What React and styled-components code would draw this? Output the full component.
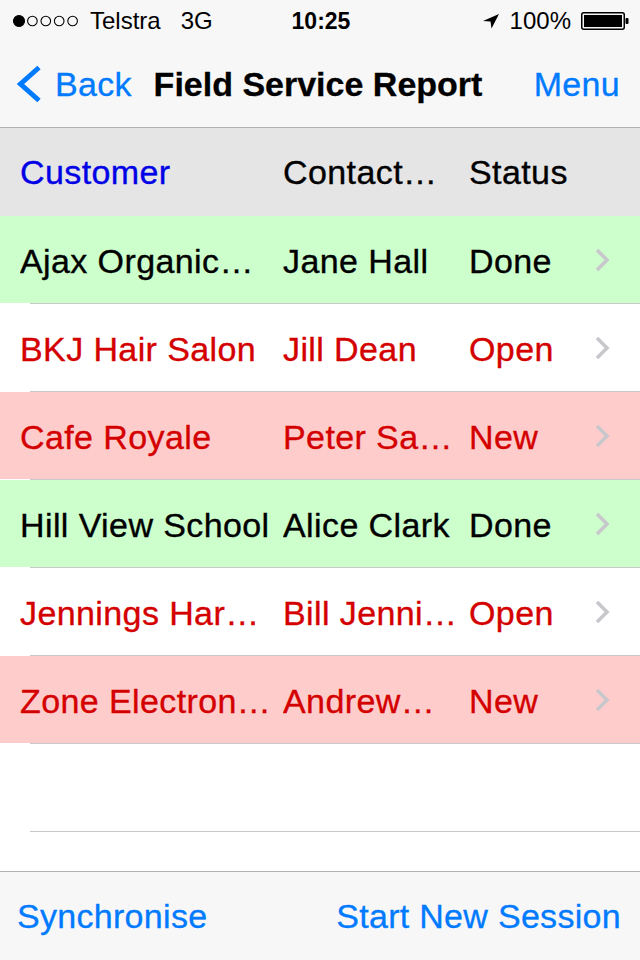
import React from "react";
import styled, { createGlobalStyle } from "styled-components";

const rows = [
  { customer: "Ajax Organic…", contact: "Jane Hall", status: "Done", tone: "done" },
  { customer: "BKJ Hair Salon", contact: "Jill Dean", status: "Open", tone: "open" },
  { customer: "Cafe Royale", contact: "Peter Sa…", status: "New", tone: "new" },
  { customer: "Hill View School", contact: "Alice Clark", status: "Done", tone: "done" },
  { customer: "Jennings Har…", contact: "Bill Jenni…", status: "Open", tone: "open" },
  { customer: "Zone Electron…", contact: "Andrew…", status: "New", tone: "new" },
];

const tones = {
  done: { bg: "#ccffcc", fg: "#000000" },
  open: { bg: "#ffffff", fg: "#d40000" },
  new: { bg: "#ffcccc", fg: "#d40000" },
};

const SignalDots = () => (
  <svg width="70" height="14" viewBox="0 0 70 14">
    {[0, 1, 2, 3, 4].map((i) => (
      <circle
        key={i}
        cx={7 + i * 13.4}
        cy="7"
        r={i === 0 ? 5.5 : 4.8}
        fill={i === 0 ? "#000" : "none"}
        stroke="#000"
        strokeWidth="1.1"
      />
    ))}
  </svg>
);

const LocationArrow = () => (
  <svg width="18" height="16" viewBox="0 0 18 16">
    <polygon points="17,1 1,8 8.5,8.5 9.5,15.5" fill="#000" />
  </svg>
);

const Battery = () => (
  <svg width="49" height="18" viewBox="0 0 49 18">
    <rect x="0.75" y="0.75" width="42.5" height="16.5" rx="2" fill="none" stroke="#000" strokeWidth="1.5" />
    <rect x="3" y="3" width="38" height="12" fill="#000" />
    <rect x="44.5" y="6" width="3" height="6" rx="1" fill="#000" />
  </svg>
);

const BackChevron = () => (
  <svg width="26" height="38" viewBox="0 0 26 38">
    <polyline points="23,2.5 4.5,19 23,35.5" fill="none" stroke="#007aff" strokeWidth="5" />
  </svg>
);

const Disclosure = () => (
  <svg width="16" height="24" viewBox="0 0 16 24">
    <polyline points="3,2 13,12 3,22" fill="none" stroke="#c7c7cc" strokeWidth="3.6" />
  </svg>
);

const App = () => {
  return (
    <>
      <GlobalStyle />
      <Screen>
        <StatusBar>
          <StatusSide>
            <SignalDots />
            <StatusText>Telstra</StatusText>
            <StatusText>3G</StatusText>
          </StatusSide>
          <Clock>10:25</Clock>
          <StatusSide $end>
            <LocationArrow />
            <StatusText>100%</StatusText>
            <Battery />
          </StatusSide>
        </StatusBar>

        <NavBar>
          <BackButton>
            <BackChevron />
            <span>Back</span>
          </BackButton>
          <NavTitle>Field Service Report</NavTitle>
          <NavAction>Menu</NavAction>
        </NavBar>

        <HeaderRow>
          <HeadCell $active>Customer</HeadCell>
          <HeadCell>Contact…</HeadCell>
          <HeadCell>Status</HeadCell>
          <span />
        </HeaderRow>

        <Table>
          {rows.map((row) => (
            <RowWrap key={row.customer}>
              <Row $tone={row.tone}>
                <Cell>{row.customer}</Cell>
                <Cell>{row.contact}</Cell>
                <Cell>{row.status}</Cell>
                <ChevronSlot>
                  <Disclosure />
                </ChevronSlot>
              </Row>
              <Separator />
            </RowWrap>
          ))}
          <RowWrap>
            <Row $tone="open" />
            <Separator />
          </RowWrap>
        </Table>

        <Toolbar>
          <ToolButton>Synchronise</ToolButton>
          <ToolButton>Start New Session</ToolButton>
        </Toolbar>
      </Screen>
    </>
  );
};

const GlobalStyle = createGlobalStyle`
  html, body, #root {
    margin: 0;
    height: 100%;
  }
  body {
    background: #ffffff;
    font-family: "Liberation Sans", Helvetica, Arial, sans-serif;
  }
`;

const Screen = styled.div`
  display: flex;
  flex-direction: column;
  height: 100%;
  width: 640px;
  overflow: hidden;
`;

const StatusBar = styled.div`
  height: 40px;
  background: #f7f7f7;
  display: grid;
  grid-template-columns: 1fr auto 1fr;
  align-items: center;
  padding: 2px 10px 0 12px;
  box-sizing: border-box;
  font-size: 24px;
  color: #000;
`;

const StatusSide = styled.div`
  display: flex;
  align-items: center;
  justify-content: ${(p) => (p.$end ? "flex-end" : "flex-start")};
  gap: ${(p) => (p.$end ? "10px" : "8px")};

  & > span + span {
    margin-left: 12px;
  }

  svg {
    display: block;
  }
`;

const StatusText = styled.span`
  line-height: 1;
`;

const Clock = styled.span`
  font-weight: bold;
  font-size: 23px;
  line-height: 1;
`;

const NavBar = styled.div`
  box-sizing: border-box;
  height: 88px;
  background: #f7f7f7;
  border-bottom: 1px solid #b2b2b2;
  display: grid;
  grid-template-columns: 1fr auto 1fr;
  align-items: center;
  padding: 2px 20px 0 16px;
  font-size: 34px;
  -webkit-text-stroke: 0.3px currentColor;
`;

const BackButton = styled.div`
  display: flex;
  align-items: center;
  gap: 13px;
  color: #007aff;
  letter-spacing: 0.3px;

  svg {
    display: block;
    margin-top: -2px;
  }
`;

const NavTitle = styled.div`
  font-weight: bold;
  color: #000;
`;

const NavAction = styled.div`
  justify-self: end;
  color: #007aff;
  letter-spacing: 0.3px;
`;

const columns = `
  display: grid;
  grid-template-columns: 263px 186px 1fr 46px;
  align-items: center;
  padding-left: 20px;
  font-size: 34px;
  letter-spacing: 0.4px;
  -webkit-text-stroke: 0.35px currentColor;
`;

const HeaderRow = styled.div`
  ${columns}
  box-sizing: border-box;
  height: 88px;
  padding-top: 1px;
  background: #e5e5e5;
`;

const HeadCell = styled.span`
  color: ${(p) => (p.$active ? "#0000e6" : "#000")};
  white-space: nowrap;
  overflow: hidden;
  text-overflow: ellipsis;
  padding-right: 8px;
`;

const Table = styled.div`
  flex: 1;
  background: #ffffff;
`;

const RowWrap = styled.div`
  display: flex;
  flex-direction: column;
`;

const Row = styled.div`
  ${columns}
  box-sizing: border-box;
  height: 87px;
  padding-top: 3px;
  background: ${(p) => tones[p.$tone].bg};
  color: ${(p) => tones[p.$tone].fg};
`;

const Cell = styled.span`
  white-space: nowrap;
  overflow: hidden;
  text-overflow: ellipsis;
  padding-right: 8px;
`;

const ChevronSlot = styled.span`
  display: flex;
  align-items: center;
  margin-top: -3px;

  svg {
    display: block;
  }
`;

const Separator = styled.div`
  height: 1px;
  margin-left: 30px;
  background: #c8c7cc;
`;

const Toolbar = styled.div`
  box-sizing: border-box;
  height: 89px;
  flex-shrink: 0;
  background: #f7f7f7;
  border-top: 1px solid #b2b2b2;
  display: flex;
  align-items: center;
  justify-content: space-between;
  padding: 0 19px 0 17px;
`;

const ToolButton = styled.span`
  color: #007aff;
  font-size: 34px;
  letter-spacing: 0.3px;
  -webkit-text-stroke: 0.3px currentColor;
`;

export default App;
